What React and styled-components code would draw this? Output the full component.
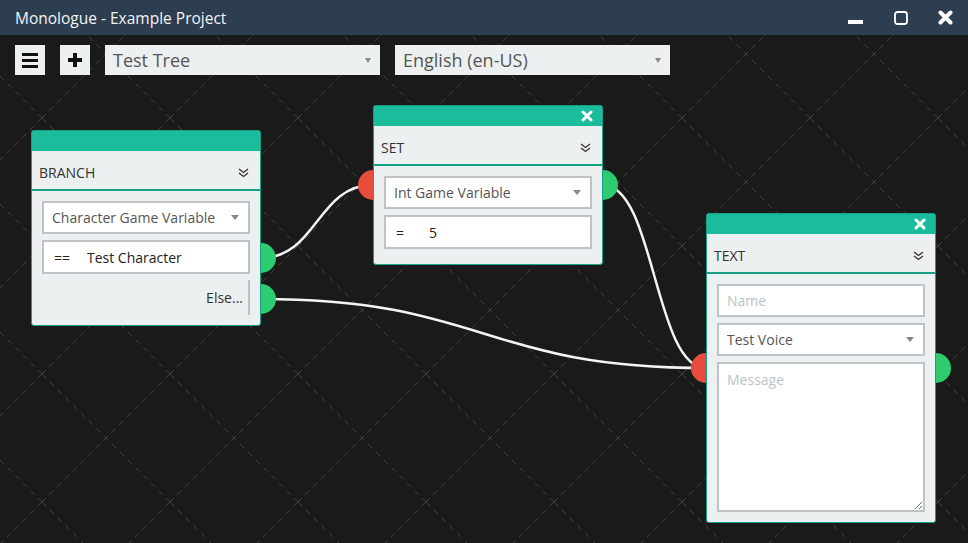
import React from 'react';
import styled, { createGlobalStyle } from 'styled-components';

const TITLE_H = 35;
const NODE_W = 230;

// node positions are canvas coordinates (page y minus the title bar)
const nodes = {
  branch: { x: 31, y: 95, outputs: [128, 169] },
  set: { x: 373, y: 70, input: 80, outputs: [80] },
  text: { x: 706, y: 178, input: 155, outputs: [155] },
};

const links = [
  ['branch', 0, 'set'],
  ['branch', 1, 'text'],
  ['set', 0, 'text'],
];

const wirePath = (from, out, to) => {
  const a = nodes[from];
  const b = nodes[to];
  const x1 = a.x + NODE_W;
  const y1 = a.y + a.outputs[out];
  const x2 = b.x;
  const y2 = b.y + b.input;
  const d = Math.max(50, (x2 - x1) / 2);
  return `M${x1} ${y1} C${x1 + d} ${y1}, ${x2 - d} ${y2}, ${x2} ${y2}`;
};

const GlobalStyle = createGlobalStyle`
  html, body {
    margin: 0;
    padding: 0;
    background: #1a1a1a;
  }
  body {
    font-family: 'Open Sans', 'Liberation Sans', sans-serif;
  }
  * {
    box-sizing: border-box;
  }
`;

const Window = styled.div`
  width: 968px;
  height: 543px;
  display: flex;
  flex-direction: column;
  overflow: hidden;
`;

const TitleBar = styled.header`
  height: ${TITLE_H}px;
  flex: none;
  display: flex;
  align-items: center;
  justify-content: space-between;
  padding-left: 15px;
  background: #2c3e50;
  color: #f2f4f5;
  font-size: 15.5px;
`;

const WindowControls = styled.div`
  display: flex;
  height: 100%;
`;

const ControlButton = styled.div`
  width: 45px;
  height: 100%;
  display: flex;
  align-items: center;
  justify-content: center;
`;

const Canvas = styled.main`
  position: relative;
  flex: 1;
  background: #1a1a1a;
`;

const Layer = styled.svg`
  position: absolute;
  inset: 0;
  width: 100%;
  height: 100%;
`;

const Toolbar = styled.div`
  position: relative;
  display: flex;
  gap: 15px;
  padding: 10px 15px;
`;

const ToolButton = styled.div`
  width: 30px;
  height: 30px;
  display: flex;
  align-items: center;
  justify-content: center;
  background: #ecf0f1;
`;

const ToolSelect = styled.div`
  width: 275px;
  height: 30px;
  display: flex;
  align-items: center;
  justify-content: space-between;
  padding: 0 9px 0 8px;
  background: #ecf0f1;
  color: #555;
  font-size: 18px;
`;

const Caret = styled.span`
  width: 0;
  height: 0;
  border-left: ${p => p.$w / 2}px solid transparent;
  border-right: ${p => p.$w / 2}px solid transparent;
  border-top: 5px solid #888;
`;

const Node = styled.section`
  position: absolute;
  width: ${NODE_W}px;
  background: #ecf0f1;
  border: 1px solid #16a085;
  border-radius: 3px;
`;

const NodeHeader = styled.div`
  height: 20px;
  display: flex;
  align-items: center;
  justify-content: flex-end;
  padding-right: 9px;
  background: #1abc9c;
`;

const NodeTitle = styled.div`
  height: 40px;
  display: flex;
  align-items: center;
  justify-content: space-between;
  padding: 5px 11px 0 7px;
  border-bottom: 2px solid #16a085;
  color: #333;
  font-size: 14px;
`;

const NodeBody = styled.div`
  display: flex;
  flex-direction: column;
  gap: 6px;
  padding: 10px 10px ${p => p.$pb}px;
`;

const Field = styled.div`
  height: ${p => p.$h}px;
  display: flex;
  align-items: center;
  justify-content: space-between;
  padding: 0 9px 0 8px;
  border: 2px solid #bdc3c7;
  background: #fff;
  color: ${p => (p.$dark ? '#222' : '#555')};
  font-size: 14px;
`;

const Operator = styled.span`
  width: 35px;
  flex: none;
  padding-left: 2px;
`;

const Value = styled.span`
  flex: 1;
`;

const TextInput = styled.input`
  height: 33px;
  padding: 0 8px;
  border: 2px solid #bdc3c7;
  background: #fff;
  font: 14px 'Open Sans', 'Liberation Sans', sans-serif;
  color: #222;
  outline: none;
  &::placeholder {
    color: #bdc3c7;
  }
`;

const TextArea = styled.textarea`
  display: block;
  height: 150px;
  padding: 6px 8px;
  border: 2px solid #bdc3c7;
  background: #fff;
  font: 14px 'Open Sans', 'Liberation Sans', sans-serif;
  color: #222;
  resize: vertical;
  outline: none;
  &::placeholder {
    color: #bdc3c7;
  }
`;

const ElseRow = styled.div`
  height: 35px;
  display: flex;
  justify-content: flex-end;
  color: #333;
  font-size: 14px;
`;

const ElseLabel = styled.span`
  display: flex;
  align-items: center;
  padding-right: 5px;
  border-right: 2px solid #bdc3c7;
`;

const Socket = styled.span`
  position: absolute;
  top: ${p => p.$top - 16}px;
  width: 15px;
  height: 30px;
  ${p =>
    p.$input
      ? 'left: -16px; border-radius: 15px 0 0 15px; background: #e74c3c;'
      : 'right: -16px; border-radius: 0 15px 15px 0; background: #2ecc71;'}
`;

const CloseIcon = ({ size = 12, color = '#fff', width = 3 }) => (
  <svg width={size} height={size} viewBox="0 0 12 12">
    <path d="M2 2 L10 10 M10 2 L2 10" stroke={color} strokeWidth={width} strokeLinecap="round" />
  </svg>
);

const Chevrons = () => (
  <svg width="11" height="10" viewBox="0 0 11 10">
    <g fill="none" stroke="#333" strokeWidth="1.3">
      <polyline points="1,1 5.5,4.5 10,1" />
      <polyline points="1,5 5.5,8.5 10,5" />
    </g>
  </svg>
);

const Select = ({ children }) => (
  <Field $h={33}>
    {children}
    <Caret $w={8} />
  </Field>
);

const GraphNode = ({ node, title, closable, pb = 10, children }) => (
  <Node style={{ left: node.x, top: node.y }}>
    <NodeHeader>{closable && <CloseIcon />}</NodeHeader>
    <NodeTitle>
      {title}
      <Chevrons />
    </NodeTitle>
    <NodeBody $pb={pb}>{children}</NodeBody>
    {node.input != null && <Socket $input $top={node.input} />}
    {node.outputs.map(top => (
      <Socket key={top} $top={top} />
    ))}
  </Node>
);

export default function App() {
  return (
    <Window>
      <GlobalStyle />
      <TitleBar>
        Monologue - Example Project
        <WindowControls>
          <ControlButton>
            <svg width="15" height="14" viewBox="0 0 15 14">
              <rect x="0" y="9" width="15" height="4" rx="0.5" fill="#fff" />
            </svg>
          </ControlButton>
          <ControlButton>
            <svg width="14" height="14" viewBox="0 0 14 14">
              <rect x="1" y="1" width="12" height="12" rx="2.5" fill="none" stroke="#fff" strokeWidth="1.8" />
            </svg>
          </ControlButton>
          <ControlButton>
            <CloseIcon size={15} width={3.2} />
          </ControlButton>
        </WindowControls>
      </TitleBar>
      <Canvas>
        <Layer>
          <defs>
            <pattern id="grid" width="128" height="128" patternUnits="userSpaceOnUse" patternTransform="translate(42 83)">
              <path d="M0 0 L128 128 M128 0 L0 128" stroke="#404040" strokeWidth="1" strokeDasharray="6 5" fill="none" />
            </pattern>
          </defs>
          <rect width="100%" height="100%" fill="url(#grid)" />
        </Layer>
        <Layer>
          {links.map(([from, out, to]) => (
            <path key={from + out + to} d={wirePath(from, out, to)} fill="none" stroke="#f4f4f4" strokeWidth="2.5" />
          ))}
        </Layer>
        <Toolbar>
          <ToolButton>
            <svg width="16" height="15" viewBox="0 0 16 15">
              <rect y="0" width="16" height="3" fill="#111" />
              <rect y="6" width="16" height="3" fill="#111" />
              <rect y="12" width="16" height="3" fill="#111" />
            </svg>
          </ToolButton>
          <ToolButton>
            <svg width="14" height="14" viewBox="0 0 14 14">
              <rect x="5" y="0" width="4" height="14" fill="#111" />
              <rect x="0" y="5" width="14" height="4" fill="#111" />
            </svg>
          </ToolButton>
          <ToolSelect>
            Test Tree
            <Caret $w={7} />
          </ToolSelect>
          <ToolSelect>
            English (en-US)
            <Caret $w={7} />
          </ToolSelect>
        </Toolbar>

        <GraphNode node={nodes.branch} title="BRANCH">
          <Select>Character Game Variable</Select>
          <Field $h={34} $dark>
            <Operator>==</Operator>
            <Value>Test Character</Value>
          </Field>
          <ElseRow>
            <ElseLabel>Else...</ElseLabel>
          </ElseRow>
        </GraphNode>

        <GraphNode node={nodes.set} title="SET" closable pb={15}>
          <Select>Int Game Variable</Select>
          <Field $h={34} $dark>
            <Operator>=</Operator>
            <Value>5</Value>
          </Field>
        </GraphNode>

        <GraphNode node={nodes.text} title="TEXT" closable>
          <TextInput placeholder="Name" />
          <Select>Test Voice</Select>
          <TextArea placeholder="Message" />
        </GraphNode>
      </Canvas>
    </Window>
  );
}
